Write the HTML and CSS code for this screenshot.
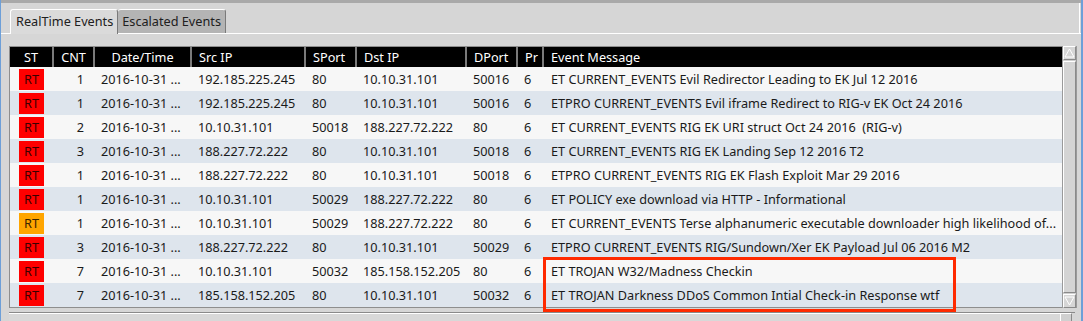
FILE: index.html
```html
<!DOCTYPE html>
<html>
<head>
<meta charset="utf-8">
<link rel="stylesheet" href="styles.css">
</head>
<body>
<div class="window">
  <div class="topstrip"></div>
  <div class="tabbar">
    <div class="tab active">RealTime Events</div>
    <div class="tab">Escalated Events</div>
  </div>
  <div class="pane">
    <div class="frame">
      <div class="table">
        <div class="row head">
          <div class="c st center">ST</div>
          <div class="c cnt center">CNT</div>
          <div class="c center">Date/Time</div>
          <div class="c">Src IP</div>
          <div class="c">SPort</div>
          <div class="c">Dst IP</div>
          <div class="c">DPort</div>
          <div class="c">Pr</div>
          <div class="c msg">Event Message</div>
        </div>
        <div class="row">
          <div class="c st"><span class="badge red">RT</span></div><div class="c num">1</div><div class="c">2016-10-31 ...</div><div class="c">192.185.225.245</div><div class="c">80</div><div class="c">10.10.31.101</div><div class="c">50016</div><div class="c">6</div><div class="c msg">ET CURRENT_EVENTS Evil Redirector Leading to EK Jul 12 2016</div>
        </div>
        <div class="row alt">
          <div class="c st"><span class="badge red">RT</span></div><div class="c num">1</div><div class="c">2016-10-31 ...</div><div class="c">192.185.225.245</div><div class="c">80</div><div class="c">10.10.31.101</div><div class="c">50016</div><div class="c">6</div><div class="c msg">ETPRO CURRENT_EVENTS Evil iframe Redirect to RIG-v EK Oct 24 2016</div>
        </div>
        <div class="row">
          <div class="c st"><span class="badge red">RT</span></div><div class="c num">2</div><div class="c">2016-10-31 ...</div><div class="c">10.10.31.101</div><div class="c">50018</div><div class="c">188.227.72.222</div><div class="c">80</div><div class="c">6</div><div class="c msg">ET CURRENT_EVENTS RIG EK URI struct Oct 24 2016  (RIG-v)</div>
        </div>
        <div class="row alt">
          <div class="c st"><span class="badge red">RT</span></div><div class="c num">3</div><div class="c">2016-10-31 ...</div><div class="c">188.227.72.222</div><div class="c">80</div><div class="c">10.10.31.101</div><div class="c">50018</div><div class="c">6</div><div class="c msg">ET CURRENT_EVENTS RIG EK Landing Sep 12 2016 T2</div>
        </div>
        <div class="row">
          <div class="c st"><span class="badge red">RT</span></div><div class="c num">1</div><div class="c">2016-10-31 ...</div><div class="c">188.227.72.222</div><div class="c">80</div><div class="c">10.10.31.101</div><div class="c">50018</div><div class="c">6</div><div class="c msg">ETPRO CURRENT_EVENTS RIG EK Flash Exploit Mar 29 2016</div>
        </div>
        <div class="row alt">
          <div class="c st"><span class="badge red">RT</span></div><div class="c num">1</div><div class="c">2016-10-31 ...</div><div class="c">10.10.31.101</div><div class="c">50029</div><div class="c">188.227.72.222</div><div class="c">80</div><div class="c">6</div><div class="c msg">ET POLICY exe download via HTTP - Informational</div>
        </div>
        <div class="row">
          <div class="c st"><span class="badge orange">RT</span></div><div class="c num">1</div><div class="c">2016-10-31 ...</div><div class="c">10.10.31.101</div><div class="c">50029</div><div class="c">188.227.72.222</div><div class="c">80</div><div class="c">6</div><div class="c msg">ET CURRENT_EVENTS Terse alphanumeric executable downloader high likelihood of...</div>
        </div>
        <div class="row alt">
          <div class="c st"><span class="badge red">RT</span></div><div class="c num">3</div><div class="c">2016-10-31 ...</div><div class="c">188.227.72.222</div><div class="c">80</div><div class="c">10.10.31.101</div><div class="c">50029</div><div class="c">6</div><div class="c msg">ETPRO CURRENT_EVENTS RIG/Sundown/Xer EK Payload Jul 06 2016 M2</div>
        </div>
        <div class="row">
          <div class="c st"><span class="badge red">RT</span></div><div class="c num">7</div><div class="c">2016-10-31 ...</div><div class="c">10.10.31.101</div><div class="c">50032</div><div class="c">185.158.152.205</div><div class="c">80</div><div class="c">6</div><div class="c msg">ET TROJAN W32/Madness Checkin</div>
        </div>
        <div class="row alt">
          <div class="c st"><span class="badge red">RT</span></div><div class="c num">7</div><div class="c">2016-10-31 ...</div><div class="c">185.158.152.205</div><div class="c">80</div><div class="c">10.10.31.101</div><div class="c">50032</div><div class="c">6</div><div class="c msg">ET TROJAN Darkness DDoS Common Intial Check-in Response wtf</div>
        </div>
        <div class="highlight"></div>
      </div>
      <div class="vscroll">
        <div class="arrow up"><svg width="11" height="10" viewBox="0 0 11 10"><path d="M5.5 1 L10 9 L1 9 Z" fill="#d4d4d4" stroke="#ffffff" stroke-width="1"/></svg></div>
        <div class="thumb"></div>
        <div class="arrow down"><svg width="11" height="10" viewBox="0 0 11 10"><path d="M5.5 9 L10 1 L1 1 Z" fill="#d4d4d4" stroke="#ffffff" stroke-width="1"/></svg></div>
      </div>
    </div>
    <div class="hscroll">
      <div class="htrack"></div>
      <div class="hcorner"></div>
    </div>
  </div>
</div>
</body>
</html>
```
FILE: styles.css
```css
html, body {
  margin: 0;
  padding: 0;
  height: 321px;
  overflow: hidden;
  background: #d6d6d6;
  font-family: "Noto Sans", "DejaVu Sans", sans-serif;
  font-size: 12.7px;
  color: #1a1a1a;
}

.window {
  height: 321px;
  border-left: 1px solid #6d9fd8;
  border-right: 2px solid #6d9fd8;
  box-sizing: border-box;
  display: flex;
  flex-direction: column;
}

.topstrip {
  height: 3px;
  background: #a9a9a9;
  flex: none;
}

.tabbar {
  display: flex;
  padding: 6px 0 0 9px;
  height: 24px;
  flex: none;
  border-right: 1px solid #ffffff;
  margin-right: 1px;
}

.tab {
  height: 24px;
  box-sizing: border-box;
  padding: 0 4px 0 4px;
  line-height: 23px;
  background: #b4b4b4;
  border-top: 1px solid #ffffff;
  border-right: 1px solid #7a7a7a;
  border-top-right-radius: 3px;
  border-top-left-radius: 3px;
  color: #202020;
  font-size: 12.7px;
}

.tab.active {
  background: #dadada;
  border-left: 1px solid #ffffff;
  border-right: 1px solid #7a7a7a;
  padding: 0 4px 0 5px;
  height: 25px;
  margin-bottom: -1px;
  position: relative;
  z-index: 1;
}

.pane {
  flex: 1;
  border-top: 1px solid #ffffff;
  padding: 12px 0 0 8px;
  display: flex;
  flex-direction: column;
}

.frame {
  display: flex;
  border: 1px solid #8e8e8e;
  border-right: none;
  width: 1066px;
  box-sizing: border-box;
}

.table {
  position: relative;
  width: 1052px;
  flex: none;
}

.row {
  display: grid;
  grid-template-columns: 42px 41px 97px 114px 51px 110px 51px 26px 1fr;
  height: 24px;
  line-height: 24px;
  background: #f7f7f7;
}

.row.alt {
  background: #dee5ed;
}

.row.head {
  height: 20px;
  line-height: 20px;
  background: #000000;
  color: #ffffff;
}

.c {
  padding-left: 8px;
  white-space: pre;
  overflow: hidden;
}

.c.msg {
  padding-left: 9px;
}

.row.head .c {
  padding-left: 7px;
  border-left: 2px solid #7a7a7a;
}

.row.head .c:first-child {
  border-left: none;
}

.row.head .c.center {
  padding-left: 0;
  text-align: center;
}

.c.st {
  padding: 0;
  display: flex;
  justify-content: center;
}

.row.head .c.st {
  display: block;
}

.c.num {
  text-align: right;
  padding: 0 9px 0 0;
}

.badge {
  display: block;
  width: 25px;
  height: 21px;
  margin-top: 2px;
  line-height: 21px;
  text-align: center;
  color: #3a0000;
  margin-left: 1px;
}

.badge.red {
  background: #ff0000;
}

.badge.orange {
  background: #ffa500;
  color: #3a2400;
}

.highlight {
  position: absolute;
  left: 533px;
  top: 210px;
  width: 413px;
  height: 55px;
  box-sizing: border-box;
  border: 3px solid #ff2a00;
}

.vscroll {
  width: 13px;
  flex: none;
  display: flex;
  flex-direction: column;
  border-left: 1px solid #9a9a9a;
  border-right: 1px solid #9a9a9a;
  background: #cfcfcf;
  margin-top: -1px;
  margin-bottom: -1px;
}

.arrow {
  height: 12px;
  display: flex;
  align-items: center;
  justify-content: center;
  background: #d6d6d6;
  border: 1px solid #ffffff;
  border-right-color: #8a8a8a;
  border-bottom-color: #8a8a8a;
  flex: none;
}

.thumb {
  flex: 1;
  margin: 1px 0;
  background: #d4d4d4;
  border: 1px solid #ffffff;
  border-right-color: #8a8a8a;
  border-bottom-color: #8a8a8a;
}

.hscroll {
  margin-top: 4px;
  display: flex;
  height: 10px;
  border-top: 1px solid #8a8a8a;
  width: 1066px;
}

.htrack {
  flex: 1;
  border-top: 1px solid #ffffff;
  background: #d8d8d8;
}

.hcorner {
  width: 10px;
  margin-right: 3px;
  background: #d0d0d0;
  border: 1px solid #ffffff;
  border-right-color: #8a8a8a;
}
```
